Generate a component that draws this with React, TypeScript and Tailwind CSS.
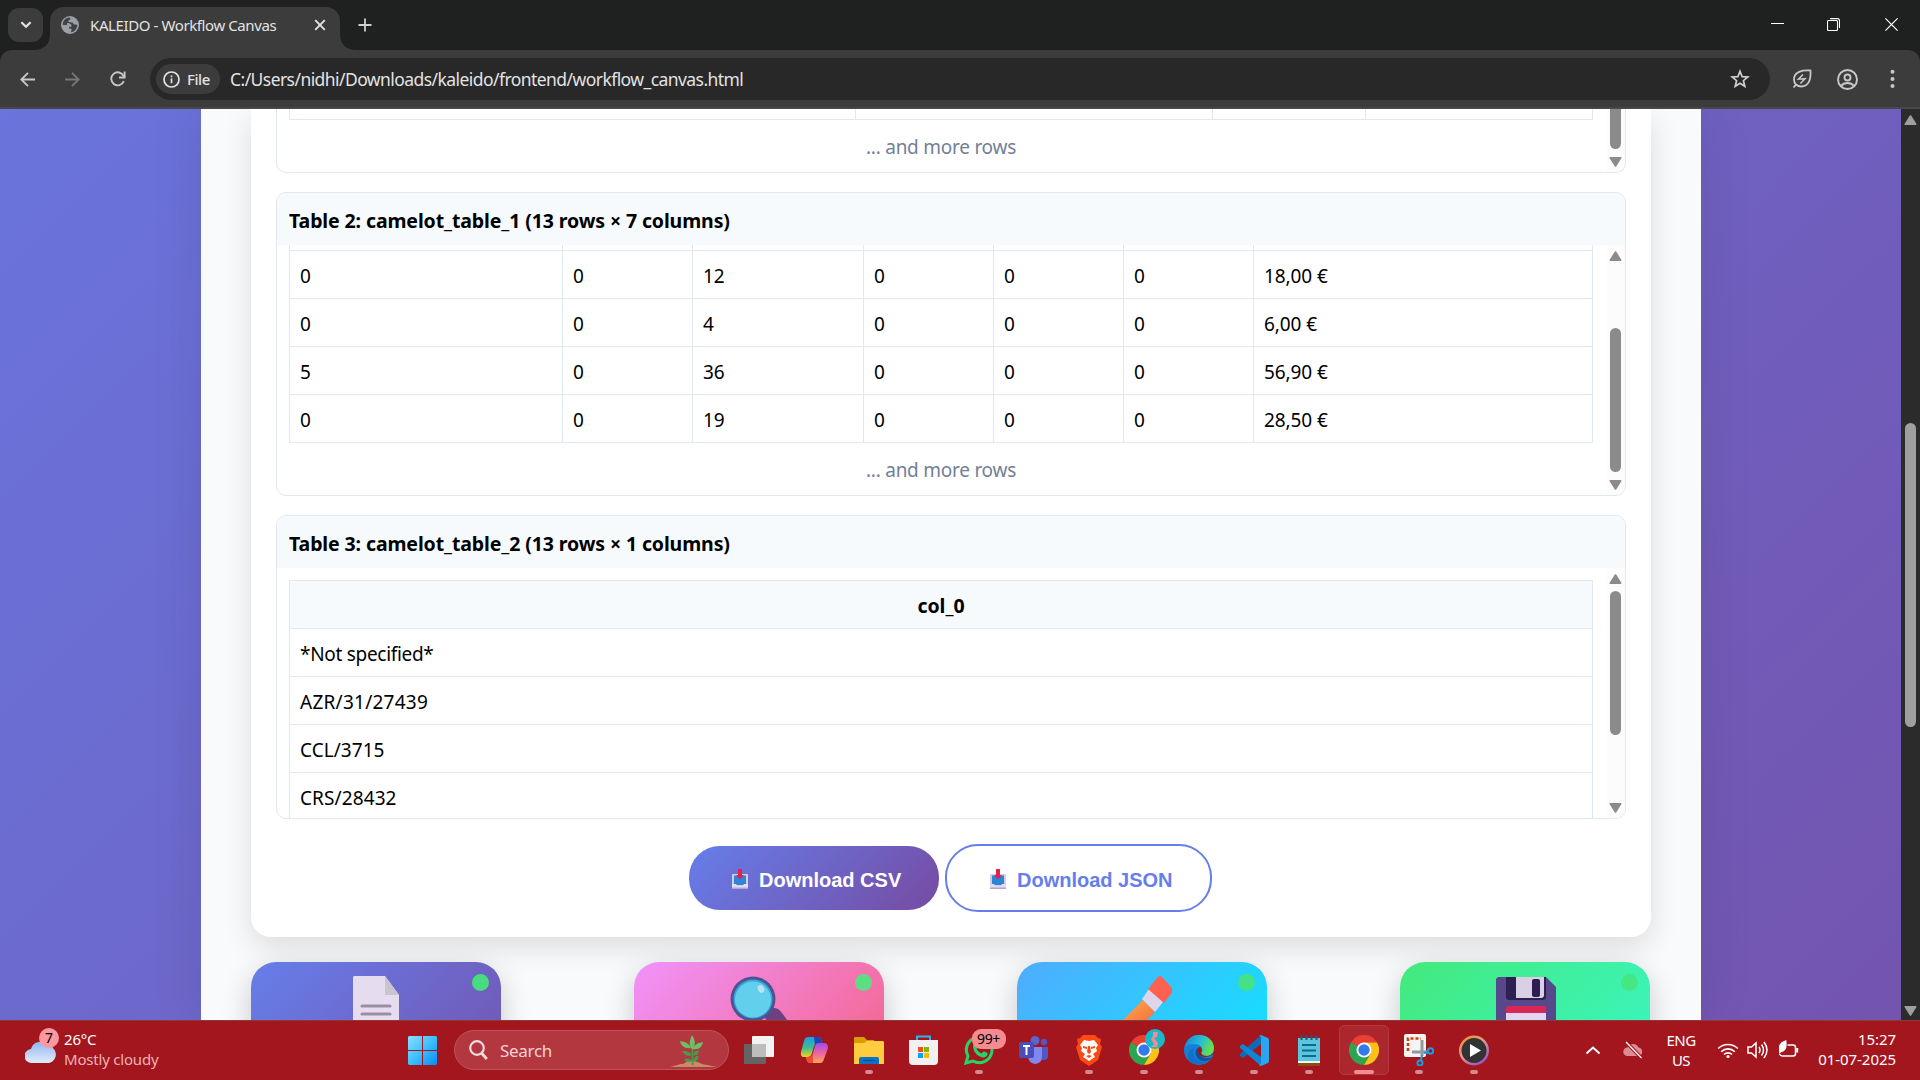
import React from "react";

const ui = "font-['Noto_Sans','Open_Sans',sans-serif]";

/* ---------- Browser chrome ---------- */

function TabStrip() {
  return (
    <div className="flex h-[50px] items-start bg-[#1f2120] text-[#e3e3e3]">
      <div className="ml-2 mt-2 flex h-[34px] w-[35px] items-center justify-center rounded-[11px] bg-[#3c3c3c]">
        <svg width="12" height="8" viewBox="0 0 12 8" fill="none" stroke="#e3e3e3" strokeWidth="2.2">
          <path d="M1.4 1.2 6 5.8l4.6-4.6" />
        </svg>
      </div>
      <svg className="-ml-[9px] mt-[34px]" width="16" height="16" viewBox="0 0 16 16">
        <path d="M16 0v16H0C10 16 16 10 16 0Z" fill="#3c3c3c" />
      </svg>
      <div className="mt-[7px] flex h-[43px] w-[290px] items-center rounded-t-[14px] bg-[#3c3c3c] pb-[7px] pl-[11px]">
        <svg width="18" height="18" viewBox="0 0 18 18">
          <circle cx="9" cy="9" r="9" fill="#9aa0a6" />
          <path d="M3 4.500C4.500 2.500 6.500 1.600 9 1.600c1 1.400-.2 2.800-1.900 3.200-.2 1.700 3 1.400 4.600 1.900 1 .6.500 1.700 1.500 1.900 1.200.2 2.300-.1 3.100.4-.1 3.700-2.600 6.700-6.300 7.300-.3-1 .6-1.700 1-2.500-.4-1-2.300-.7-2.900-1.700-.2-1.100.9-1.600.4-2.400C6.500 8.900 3.600 9.500 1.700 8.800 1.700 7.200 2.200 5.700 3 4.500Z" fill="#3f4246" />
          <path d="M6 7.300c1.600-.6 3.100.2 4.200 1.500.8 1 .4 1.900-.6 2.100-1.600-.5-4.500-1.500-3.600-3.600Z" fill="#9aa0a6" />
        </svg>
        <span className={`${ui} ml-[11px] w-[224px] text-[15px] leading-5 tracking-[-0.4px] whitespace-nowrap`}>KALEIDO - Workflow Canvas</span>
        <svg width="12" height="12" viewBox="0 0 12 12" stroke="#e3e3e3" strokeWidth="1.9">
          <path d="m1.200 1.200 9.600 9.600m0-9.600-9.600 9.600" />
        </svg>
      </div>
      <svg className="mt-[34px]" width="16" height="16" viewBox="0 0 16 16">
        <path d="M0 0c0 10 6 16 16 16H0Z" fill="#3c3c3c" />
      </svg>
      <svg className="ml-[2px] mt-[18px]" width="14" height="14" viewBox="0 0 14 14" stroke="#d0d0d0" strokeWidth="1.8">
        <path d="M7 .5v13M.5 7h13" />
      </svg>
      <div className="ml-auto mr-[22px] mt-[18px] flex items-start">
        <svg width="13" height="13" viewBox="0 0 13 13"><path d="M0 5.500h13" stroke="#fff" /></svg>
        <svg className="ml-[43px]" width="13" height="13" viewBox="0 0 13 13" fill="none" stroke="#fff" strokeWidth="1.100">
          <rect x=".500" y="2.500" width="10" height="10" rx="1" />
          <path d="M3 .600h7.500a2 2 0 0 1 2 2V10" />
        </svg>
        <svg className="ml-[45px]" width="13" height="13" viewBox="0 0 13 13" stroke="#fff" strokeWidth="1.200"><path d="m.400.400 12.200 12.200m0-12.200L.400 12.600" /></svg>
      </div>
    </div>
  );
}

function Toolbar() {
  return (
    <div className="bg-[#1f2120]">
      <div className="flex h-[59px] items-start rounded-t-[12px] border-b-2 border-[#484848] bg-[#3c3c3c] pt-2">
        <div className="flex h-[42px] w-[150px] items-center pl-[20px]">
          <svg width="15" height="15" viewBox="0 0 15 15" fill="none" stroke="#c7c7c7" strokeWidth="1.900"><path d="M15 7.500H1.500M8 .800 1.300 7.500 8 14.200" /></svg>
          <svg className="ml-[30px]" width="15" height="15" viewBox="0 0 15 15" fill="none" stroke="#767676" strokeWidth="1.900"><path d="M0 7.500h13.500M7 .800l6.700 6.700L7 14.200" /></svg>
          <svg className="ml-[30px]" width="16" height="16" viewBox="0 0 16 16" fill="none" stroke="#c7c7c7" strokeWidth="1.900">
            <path d="M13.800 10.200A6.500 6.500 0 1 1 13.600 5L15 6.200" /><path d="M14.600.5v6H9" />
          </svg>
        </div>
        <div className="flex h-[42px] w-[1620px] items-center rounded-full bg-[#282828] pl-[6px]">
          <div className="flex h-[30px] w-[64px] items-center rounded-full bg-[#3c3c3c] pl-[7px]">
            <svg width="17" height="17" viewBox="0 0 17 17" fill="none" stroke="#e3e3e3" strokeWidth="1.700">
              <circle cx="8.500" cy="8.500" r="7.500" /><path d="M8.500 7.600v4.600M8.500 4.500v1.700" />
            </svg>
            <span className={`${ui} ml-[7px] text-[15px] font-medium leading-5 tracking-[-0.45px] text-[#e3e3e3]`}>File</span>
          </div>
          <span className={`${ui} ml-[10px] text-[17.500px] leading-6 tracking-[-0.560px] text-[#e3e3e3]`}>C:/Users/nidhi/Downloads/kaleido/frontend/workflow_canvas.html</span>
          <svg className="ml-auto mr-[20px]" width="20" height="20" viewBox="0 0 20 20" fill="none" stroke="#d0d0d0" strokeWidth="1.700">
            <path d="m10 2.300 2.100 5.300 5.700.4-4.400 3.700 1.400 5.600L10 14.200l-4.800 3.100 1.400-5.600L2.200 8l5.700-.4Z" />
          </svg>
        </div>
        <div className="flex h-[42px] items-center pl-[22px]">
          <svg width="20" height="20" viewBox="0 0 20 20" fill="none" stroke="#c7c7c7" strokeWidth="1.800">
            <path d="M18.500 1.500C10 1 2 2.500 2 10.500c0 2.300.8 3.800 2 5 1.300 1.200 3 2 5.300 2 7.700 0 9.700-7.500 9.200-16ZM1.500 18.500 4 15.600" />
            <path d="m11 5.500-4.500 4.700 6.500-.4-4.600 4.700" strokeWidth="1.600" />
          </svg>
          <svg className="ml-[25px]" width="21" height="21" viewBox="0 0 21 21" fill="none" stroke="#c7c7c7" strokeWidth="1.900">
            <circle cx="10.500" cy="10.500" r="9.500" /><circle cx="10.500" cy="8.500" r="3" /><path d="M4 17c1.600-2.200 3.800-3 6.500-3s4.900.8 6.500 3" />
          </svg>
          <svg className="ml-[32px]" width="5" height="20" viewBox="0 0 5 20" fill="#c7c7c7">
            <circle cx="2.500" cy="2.800" r="2" /><circle cx="2.500" cy="10" r="2" /><circle cx="2.500" cy="17" r="2" />
          </svg>
        </div>
      </div>
    </div>
  );
}

/* ---------- Page content ---------- */

function Arrow({ down, className }: { down?: boolean; className: string }) {
  return (
    <svg width="13" height="10" viewBox="0 0 13 10" className={`shrink-0 ${className}`}>
      <path d={down ? "M1.300.8h10.400L6.500 9Z" : "M1.300 9.200h10.400L6.500 1Z"} fill="currentColor" stroke="currentColor" strokeLinejoin="round" strokeWidth="1.600" />
    </svg>
  );
}

function TableBox({ title, children, bar }: { title: string; children: React.ReactNode; bar: React.ReactNode }) {
  return (
    <section className="mb-[19px] h-[304px] overflow-hidden rounded-[10px] border border-[#e2e8f0]">
      <h3 className="h-[52px] bg-[#f7fafc] pl-[12px] pt-[15px] text-[19.500px] font-bold leading-[26px] tracking-[-0.110px]">{title}</h3>
      <div className="flex h-[250px] overflow-hidden">
        <div className="w-[1330px] pl-[12px] pr-[14px]">{children}</div>
        <div className="flex w-[18px] flex-col items-center bg-[#fcfcfc] pr-px text-[#8b8b8b]">{bar}</div>
      </div>
    </section>
  );
}

const cols = "grid grid-cols-[273px_130px_171px_130px_130px_130px_1fr]";
const rows = [
  ["0", "0", "12", "0", "0", "0", "18,00 €"],
  ["0", "0", "4", "0", "0", "0", "6,00 €"],
  ["5", "0", "36", "0", "0", "0", "56,90 €"],
  ["0", "0", "19", "0", "0", "0", "28,50 €"],
];
const codes = [
  { text: "*Not specified*", spacing: "tracking-[-0.300px]" },
  { text: "AZR/31/27439", spacing: "tracking-[0.250px]" },
  { text: "CCL/3715", spacing: "tracking-[0.050px]" },
  { text: "CRS/28432", spacing: "tracking-[0.100px]" },
];

function MoreRows() {
  return <p className="text-center text-[19px] leading-7 tracking-[-0.250px] text-[#718096]">... and more rows</p>;
}

function Results() {
  return (
    <div className="mx-[50px] h-[828px] rounded-b-[20px] bg-white px-[25px] shadow-[0_10px_30px_rgba(0,0,0,0.120)]">
      <section className="mb-[19px] flex h-[64px] overflow-hidden rounded-b-[10px] border border-t-0 border-[#e2e8f0]">
        <div className="w-[1330px] pl-[12px] pr-[14px]">
          <div className="mb-[13px] grid h-[11px] grid-cols-[566px_357px_153px_1fr] border-b border-r border-[#e2e8f0]">
            {[0, 1, 2, 3].map((i) => <div key={i} className="border-l border-[#e2e8f0]" />)}
          </div>
          <MoreRows />
        </div>
        <div className="flex w-[18px] flex-col items-center bg-[#fcfcfc] pr-px text-[#8b8b8b]">
          <div className="h-[40px] w-[11px] rounded-b-full bg-[#8b8b8b]" />
          <Arrow down className="mt-2" />
        </div>
      </section>

      <TableBox
        title="Table 2: camelot_table_1 (13 rows × 7 columns)"
        bar={<><Arrow className="mt-[6px]" /><div className="mt-[67px] h-[144px] w-[11px] shrink-0 rounded-full bg-[#8b8b8b]" /><Arrow down className="mt-2" /></>}
      >
        <div className="mb-[13px] border-b border-r border-[#e2e8f0]">
          <div className={`${cols} h-[5px]`}>
            {rows[0].map((_, i) => <div key={i} className="border-l border-[#e2e8f0]" />)}
          </div>
          {rows.map((r, y) => (
            <div key={y} className={cols}>
              {r.map((c, x) => (
                <div key={x} className="h-[48px] border-l border-t border-[#e2e8f0] pl-[10px] pt-[12px] text-[19px] leading-[26px] tracking-[-0.100px]">{c}</div>
              ))}
            </div>
          ))}
        </div>
        <MoreRows />
      </TableBox>

      <TableBox
        title="Table 3: camelot_table_2 (13 rows × 1 columns)"
        bar={<><Arrow className="mt-[6px]" /><div className="mt-[7px] h-[144px] w-[11px] shrink-0 rounded-full bg-[#8b8b8b]" /><Arrow down className="mt-[68px]" /></>}
      >
        <div className="mt-[12px] border-r border-[#e2e8f0]">
          <div className="h-[48px] border-l border-t border-[#e2e8f0] bg-[#f7fafc] pt-[12px] text-center text-[19.500px] font-bold leading-[26px] tracking-[0px]">col_0</div>
          {codes.map((c) => (
            <div key={c.text} className={`h-[48px] border-l border-t border-[#e2e8f0] pl-[10px] pt-[12px] text-[19px] leading-[26px] ${c.spacing}`}>{c.text}</div>
          ))}
        </div>
      </TableBox>

      <div className="mt-[25px] flex items-center pl-[413px] font-['Liberation_Sans',Arial,sans-serif] text-[20px] font-bold">
        <button className="flex h-[64px] w-[250px] items-center rounded-[31px] bg-[linear-gradient(135deg,#667eea,#764ba2)] pl-[43px] text-white">
          <Inbox /><span className="ml-[11px] mt-[4px]">Download CSV</span>
        </button>
        <button className="ml-[6px] flex h-[68px] w-[267px] items-center rounded-[33px] border-2 border-[#667eea] bg-white pl-[43px] text-[#667eea]">
          <Inbox /><span className="ml-[11px] mt-[4px]">Download JSON</span>
        </button>
      </div>
    </div>
  );
}

function Inbox() {
  return (
    <svg className="mt-[2px] shrink-0" width="16" height="20" viewBox="0 0 16 20">
      <path d="M1 5h14q1 0 1 1v14H0V6q0-1 1-1Z" fill="#d5cde0" />
      <path d="M2 6.500h12V16H2Z" fill="#2b86d8" />
      <path d="M0 15h4l1.500 2h5l1.500-2h4v5H0Z" fill="#e4dced" /><path d="M0 18.500h16V20H0Z" fill="#b9a5cc" />
      <path d="M6 0h4v6h2L8 10.500 4 6h2Z" fill="#e0244f" />
    </svg>
  );
}

function StepCard({ bg, dot, children, gap }: { bg: string; dot: string; children: React.ReactNode; gap?: string }) {
  return (
    <div className={`relative flex h-[200px] w-[250px] shrink-0 justify-center rounded-[25px] shadow-[0_10px_30px_rgba(0,0,0,0.200)] ${bg} ${gap ?? ""}`}>
      {children}
      <span className={`absolute right-[12px] top-[12px] size-[17px] rounded-full ${dot}`} />
    </div>
  );
}

function Steps() {
  return (
    <div className="ml-[50px] mt-[25px] flex">
      <StepCard bg="bg-[linear-gradient(135deg,#667eea,#764ba2)]" dot="bg-[#48db80]">
        <svg className="mt-[14px]" width="48" height="60" viewBox="0 0 48 60">
          <path d="M2 0h31l14 19v41H1V1Z" fill="#e6dcef" />
          <path d="m33 0 14 19H33Z" fill="#cbc3d0" />
          <path d="M10 30h28M10 38h28M10 46.500h28M10 55h18" stroke="#9990a2" strokeWidth="3" strokeLinecap="round" />
        </svg>
      </StepCard>
      <StepCard gap="ml-[133px]" bg="bg-[linear-gradient(135deg,#f093fb,#f5576c)]" dot="bg-[#5fdd82]">
        <svg className="mt-[14px]" width="60" height="60" viewBox="0 0 60 60">
          <path d="m38 36 6-4c6-1 10 6 14 12l-10 14-12-16Z" fill="#6d4080" />
          <circle cx="24" cy="23" r="22.500" fill="#4f5290" />
          <circle cx="24" cy="23" r="19.500" fill="#36a6dd" /><circle cx="24" cy="23.500" r="18" fill="#62d0ec" />
          <ellipse cx="32" cy="13" rx="3" ry="4" fill="#bfe0f5" transform="rotate(-30 32 13)" />
        </svg>
      </StepCard>
      <StepCard gap="ml-[133px]" bg="bg-[linear-gradient(135deg,#4facfe,#00f2fe)]" dot="bg-[#43e287]">
        <svg className="mt-[14px]" width="60" height="60" viewBox="0 0 60 60">
          <defs><linearGradient id="pc" x1="0" y1="0" x2="1" y2="1"><stop offset=".35" stopColor="#ff9a45" /><stop offset="1" stopColor="#e65c40" /></linearGradient></defs>
          <path d="M31 24 43 36 19 60H-5Z" fill="url(#pc)" />
          <path d="m37 13 14 13-8 10-13-13Z" fill="#ded4ec" />
          <path d="M45 2q3-4 6 0l8 9q3 4 0 7l-7 9L36 13Z" fill="#ff6150" />
        </svg>
      </StepCard>
      <StepCard gap="ml-[133px]" bg="bg-[linear-gradient(135deg,#43e97b,#38f9d7)]" dot="bg-[#45e783]">
        <svg className="ml-[2px] mt-[15px]" width="60" height="60" viewBox="0 0 60 60">
          <path d="M2 0h48l10 10v50H0V2Z" fill="#57488c" />
          <path d="M10 0h40v20q0 3-3 3H13q-3 0-3-3Z" fill="#2f2052" />
          <path d="M20 0h28v18q0 3-3 3H20Z" fill="#d9d0e6" />
          <rect x="36" y="2" width="8" height="18" rx="2" fill="#2f1c50" />
          <path d="M12 29h36q2 0 2 3v7H10v-7q0-3 2-3Z" fill="#d92657" /><path d="M10 36h40v24H10Z" fill="#e0d4ee" />
        </svg>
      </StepCard>
    </div>
  );
}

/* ---------- Taskbar ---------- */

function ChromeIcon() {
  return (
    <svg width="30" height="30" viewBox="0 0 30 30">
      <path d="M15 15 2 7.500A15 15 0 0 1 28 7.500H15Z" fill="#ea3f33" />
      <path d="M15 15 2 7.500A15 15 0 0 0 15 30l6.500-11.200Z" fill="#2da44f" />
      <path d="M15 7.500h13A15 15 0 0 1 15 30l6.500-11.200Z" fill="#fbc116" />
      <circle cx="15" cy="15" r="7.500" fill="#fff" /><circle cx="15" cy="15" r="5.700" fill="#3579ea" />
    </svg>
  );
}

function Item({ children, dot, active }: { children: React.ReactNode; dot?: boolean; active?: boolean }) {
  return (
    <div className="flex h-[60px] w-[55px] shrink-0 justify-center pt-[4px]">
      <div className={`relative flex h-[50px] w-[50px] items-center justify-center rounded-[5px] ${active ? "border border-[#b23a41] bg-[#ac262e]" : ""}`}>
        {children}
        {dot && <span className={`absolute h-[4px] rounded-full ${active ? "bottom-0 w-[20px] bg-[#f58a91]" : "bottom-[1px] w-[8px] bg-[#d28a8f]"}`} />}
      </div>
    </div>
  );
}

function Taskbar() {
  return (
    <div className={`${ui} flex h-[60px] border-t border-[#8c3b36] bg-[#a4161e] text-white`}>
      <div className="flex w-[395px] pl-[25px] text-[15px] leading-5">
        <div className="relative w-[39px] pt-[12px]">
          <svg width="31" height="32" viewBox="0 0 31 32">
            <circle cx="21" cy="15" r="7" fill="#f28a1c" />
            <defs><linearGradient id="cl" x2="0" y2="1"><stop stopColor="#8fb5ee" /><stop offset="1" stopColor="#e3edfb" /></linearGradient></defs>
            <path d="M7 30a7 7 0 0 1-1-14 9.500 9.500 0 0 1 17-3 8.600 8.600 0 0 1 1 17Z" fill="url(#cl)" />
          </svg>
          <span className="absolute left-[14px] top-[7px] size-[20px] rounded-full bg-[#ff97a0] text-center text-[14px] leading-5 text-black">7</span>
        </div>
        <div className="pt-[8px] tracking-[-0.200px]">
          <div>26°C</div>
          <div className="text-[#e9b3b7]">Mostly cloudy</div>
        </div>
      </div>
      <div className="flex">
        <Item>
          <svg width="29" height="29" viewBox="0 0 29 29">
            <defs><linearGradient id="wn" x2="1" y2="1"><stop stopColor="#8be0ff" /><stop offset=".5" stopColor="#3cc0fc" /><stop offset="1" stopColor="#0a8af5" /></linearGradient></defs>
            <path d="M1 0h13v14H0V1Zm14 0h13l1 1v13H15ZM0 15h14v14H1l-1-1Zm15 0h14v13l-1 1H15Z" fill="url(#wn)" />
          </svg>
        </Item>
        <div className="ml-[4px] mr-[2px] mt-[9px] flex h-[40px] w-[275px] items-center rounded-full border border-[#bd535a] bg-[#b2373e] pl-[14px]">
          <svg width="19" height="20" viewBox="0 0 19 20" fill="none" stroke="#f1dcdd" strokeWidth="2.200"><circle cx="8" cy="8" r="6.800" /><path d="m12.500 13 5.300 6" strokeWidth="2.800" /></svg>
          <span className="ml-[12px] mt-[2px] text-[17px] tracking-[-0.300px] text-[#f0d3d5]">Search</span>
          <svg className="ml-auto mr-[11px] mt-[2px]" width="47" height="33" viewBox="0 0 47 33">
            <path d="M0 32c6-1 8-3 13-3 4-3 7-4 11-3 5 1 9 4 13 4l10 2Z" fill="#c98a68" />
            <path d="M22.500 30V11" stroke="#4c9a3f" strokeWidth="1.800" />
            <g fill="#6fbf6a"><path d="M22 14c-4-5-2-9 0-14 3 5 4 9 1 14Z" /><path d="M21 13c-2-5-6-6-11-7 1 5 5 8 11 7ZM23 14c2-5 5-6 10-7-1 5-4 8-10 7Z" /></g>
            <g fill="#429d50"><path d="M22 20c-3-4-6-4-10-4 2 4 6 6 10 4ZM22 26c-3-3-5-3-8-2 2 3 5 4 8 2ZM23 20c1-4 4-5 6-4 0 3-3 5-6 4ZM23 27c1-4 3-7 5-6 1 3-1 5-5 6Z" /></g>
          </svg>
        </div>
        <Item>
          <svg width="30" height="28" viewBox="0 0 30 28"><rect y="8" width="22" height="20" rx="1" fill="#646464" /><rect x="8" width="22" height="21" rx="1" fill="#f3f3f3" /><path d="M8 8h14v13H8Z" fill="#bdbdbd" /></svg>
        </Item>
        <Item>
          <svg width="28" height="26" viewBox="0 0 28 26">
            <defs>
              <linearGradient id="ca" x2="0" y2="1"><stop stopColor="#1f9bee" /><stop offset=".55" stopColor="#3ec08a" /><stop offset="1" stopColor="#f5d31c" /></linearGradient>
              <linearGradient id="cb" x2="0" y2="1"><stop stopColor="#a04bf0" /><stop offset=".55" stopColor="#f0679a" /><stop offset="1" stopColor="#ffa65a" /></linearGradient>
            </defs>
            <path d="M8 0h10q3 0 4 6h-4q-3 0-4 3l-2 7q-1 4-5 4H4q-4 0-3-5L4 4Q5 0 8 0Z" fill="url(#ca)" />
            <path d="M14 0h4q3 0 4 6h-4q-2 0-3 2Z" fill="#1246c4" />
            <path d="M20 26H10q-3 0-4-6h3q3 0 4-4l2-7q1-3 4-3h5q4 0 4 5l-4 11q-1 4-4 4Z" fill="url(#cb)" />
            <path d="M13 26h-3q-3 0-4-6h3q3 0 4-4Z" fill="#ee4b35" />
          </svg>
        </Item>
        <Item dot>
          <svg width="30" height="29" viewBox="0 0 30 29"><path d="M0 2q0-1 1-1h9l3 3h7v8H0Z" fill="#dc9a04" /><path d="M0 7h10l3-2h16l1 1v22H0Z" fill="#ffcb3f" /><path d="M5 28v-5q0-2 2-2h16q2 0 2 2v5Z" fill="#0e72c4" /><path d="M9 24.500h12" stroke="#0a4a8c" /></svg>
        </Item>
        <Item>
          <svg width="29" height="30" viewBox="0 0 29 30"><path d="M8 7V1.500h13V7" fill="none" stroke="#27b4f2" strokeWidth="2" /><path d="M0 5h29v21q0 4-4 4H4q-4 0-4-4Z" fill="#f1f1f1" /><path d="M9 12h5v5H9Z" fill="#f05022" /><path d="M15 12h5v5h-5Z" fill="#7fba00" /><path d="M9 18h5v5H9Z" fill="#00a4ef" /><path d="M15 18h5v5h-5Z" fill="#ffb900" /></svg>
        </Item>
        <Item dot>
          <svg width="30" height="30" viewBox="0 0 30 30"><path d="m2 28 2-7a12.800 12.800 0 1 1 5 5Z" fill="none" stroke="#27d366" strokeWidth="3" /><path d="M10 8c2-1 3 0 4 4l-1.500 2q2 3.500 5 4.500l2-2q5 1 4 3-1.500 3.500-5 3Q10 20 9 12q0-3 1-4Z" fill="#27d366" /></svg>
          <span className="absolute left-[18px] top-[4px] h-[20px] w-[34px] rounded-[9px] bg-[#f58a91] text-center text-[14px] leading-5 tracking-[-0.300px] text-black">99+</span>
        </Item>
        <Item>
          <svg width="29" height="28" viewBox="0 0 29 28"><circle cx="16" cy="4.500" r="4.500" fill="#5b64cf" /><circle cx="25" cy="6" r="3.200" fill="#4f58c4" /><path d="M20 11h9v9q0 4-4 4h-5Z" fill="#4f58c4" /><path d="M10 11h13v10q0 6-7 7-6-1-7-7Z" fill="#7f88ee" /><rect y="6" width="15" height="16" rx="2" fill="#4650b8" /><path d="M4 10h7M7.500 10v9" stroke="#fff" strokeWidth="2" /></svg>
        </Item>
        <Item dot>
          <svg width="26" height="31" viewBox="0 0 26 31"><path d="m7 0h12l3 3 3 1-1 5 2 3-4 13-9 6-9-6L0 12l2-3-1-5 3-1Z" fill="#fb4a13" /><path d="m8 5 5 1 5-1 4 5-2 3 1 3-4 3 2 3-6 4-6-4 2-3-4-3 1-3-2-3Z" fill="#fff" /><path d="m7 11 4 1v2l-4-1Zm12 0-4 1v2l4-1ZM12 11h2l1 6-2 2-2-2Zm-2 10 3-1 3 1-3 2Z" fill="#fb4a13" /></svg>
        </Item>
        <Item dot>
          <ChromeIcon />
          <span className="absolute left-[26px] top-[4px] flex size-[20px] items-center justify-center rounded-full bg-[#1bb7cb]">
            <svg width="9" height="15" viewBox="0 0 9 15"><path d="M3 0h5L7 5 4 6l4 5-1 4H1l3-3-3-5 2-3Z" fill="#f08d91" /></svg>
          </span>
        </Item>
        <Item dot>
          <svg width="30" height="30" viewBox="0 0 30 30">
            <defs><linearGradient id="ea" x2="1" y2=".3"><stop stopColor="#1485d8" /><stop offset=".6" stopColor="#28bfd3" /><stop offset="1" stopColor="#64e04c" /></linearGradient></defs>
            <circle cx="15" cy="15" r="15" fill="#1481d6" />
            <path d="M1 12C3 3 9 0 15 0c9 0 15 6 15 13 0 5-4 8-8 8-3 0-5-1-5-3 2-2 2-6-2-8-5-2-11-1-14 2Z" fill="url(#ea)" />
            <path d="M10 13c-3 8 3 14 12 14-9 6-20 1-18-8 1-4 4-5 6-6Z" fill="#1270c8" />
            <path d="M15 12c-6 2-4 13 4 14 4 1 7-1 9-4-5 3-14 0-12-5Z" fill="#10519c" />
            <path d="M17 18c2-2 1-5-1-6-3 1-3 6 1 9 4 2 8 1 13-2l-1 3 2-2v-4c-2 3-5 5-8 5-3 0-5-1-6-3Z" fill="#a4161e" />
          </svg>
        </Item>
        <Item dot>
          <svg width="30" height="31" viewBox="0 0 30 31"><path d="M22 0v9L4 23l-3-2v-2Z" fill="#0a6cb8" /><path d="m1 11 3-2 18 13v9L1 13Z" fill="#0c86d6" /><path d="m22 0 7 3q1 1 1 2v21q0 1-1 2l-7 3-2-1 2-2V2l-2-1Z" fill="#2aa6f0" /></svg>
        </Item>
        <Item dot>
          <svg width="22" height="31" viewBox="0 0 22 31"><path d="M0 3h22v24H0Z" fill="#5cc4dd" /><path d="M0 26h22v2H0Z" fill="#f0f4f5" /><path d="M0 28h22v3H0Z" fill="#8a4a10" /><path d="M3.500 0v5M8.500 0v5M13.500 0v5M18.500 0v5" stroke="#1b5f7c" strokeWidth="2" /><path d="M4 10h14M4 15.500h14M4 21h14" stroke="#0c6a8c" strokeWidth="2" /></svg>
        </Item>
        <Item dot active><ChromeIcon /></Item>
        <Item dot>
          <svg width="30" height="32" viewBox="0 0 30 32"><rect width="22" height="23" rx="2" fill="#f4f4f4" /><path d="M4 17V4.500h13" fill="none" stroke="#d83b0a" strokeWidth="2.600" strokeDasharray="3 2" /><path d="M8 18h16M18 6v16" stroke="#9299a0" strokeWidth="3" /><circle cx="26.500" cy="17" r="2.700" fill="none" stroke="#1e9be0" strokeWidth="2" /><circle cx="16" cy="29" r="2.500" fill="none" stroke="#1e9be0" strokeWidth="2" /><path d="m20 19 4-1M17 26l1-5" stroke="#1e9be0" strokeWidth="2" /></svg>
        </Item>
        <Item dot>
          <svg width="30" height="31" viewBox="0 0 30 31"><defs><linearGradient id="mp" x2=".7" y2="1"><stop stopColor="#ff8a1f" /><stop offset=".5" stopColor="#e49a8c" /><stop offset="1" stopColor="#9a50c8" /></linearGradient></defs><circle cx="15" cy="15.500" r="15" fill="url(#mp)" /><circle cx="15" cy="15.500" r="12.500" fill="#333" /><path d="M11 9v13l11-6.500Z" fill="#fff" /></svg>
        </Item>
      </div>
      <div className="ml-auto flex pr-[24px] text-[15px] leading-5">
        <svg className="mt-[24px]" width="16" height="10" viewBox="0 0 16 10" fill="none" stroke="#fff" strokeWidth="2"><path d="m1.500 8.500 6.500-6 6.500 6" /></svg>
        <svg className="ml-[22px] mt-[20px]" width="21" height="18" viewBox="0 0 21 18"><path d="M4.500 15a4 4 0 0 1 0-8.500 6 6 0 0 1 11 0 4.300 4.300 0 0 1 0 8.500Z" fill="#d98c91" /><path d="m3 1 15.500 16" stroke="#a4161e" strokeWidth="3.500" /><path d="m3 1 15.500 16" stroke="#fff" strokeWidth="1.300" /></svg>
        <div className="ml-[19px] w-[36px] pt-[9px] text-center tracking-[-0.500px]">ENG<br />US</div>
        <svg className="ml-[18px] mt-[21px]" width="22" height="17" viewBox="0 0 22 17" fill="none" stroke="#fff" strokeWidth="1.600"><path d="M1.200 6.500a14 14 0 0 1 19.600 0M4.200 9.700a9.700 9.700 0 0 1 13.600 0M7 12.500a5.700 5.700 0 0 1 8 0" /><circle cx="11" cy="14.500" r="1.600" fill="#fff" stroke="none" /></svg>
        <svg className="ml-[8px] mt-[20px]" width="22" height="18" viewBox="0 0 22 18" fill="none" stroke="#fff" strokeWidth="1.500"><path d="M1 6h3.500L9 2v14l-4.500-4H1ZM12 6q2 3 0 6M14.500 3.500q4 5.500 0 11M17 1q6 8 0 16" /></svg>
        <svg className="ml-[9px] mt-[19px]" width="21" height="18" viewBox="0 0 21 18" fill="none" stroke="#fff" strokeWidth="1.500"><path d="M9.500 5H15q2.500 0 2.500 2.500v6Q17.500 16 15 16H4.500Q2.500 16 1.500 14" /><path d="M19.200 8v4.500" strokeWidth="2" /><path d="M8.300 0C9 6 9 11 3.500 12L1 14V6q1-4 7.300-6Z" fill="#fff" stroke="none" /></svg>
        <div className="ml-[16px] w-[81px] whitespace-nowrap pt-[8px] text-right tracking-[-0.050px]">15:27<br />01-07-2025</div>
      </div>
    </div>
  );
}

export default function App() {
  return (
    <div className={`${ui} h-[1080px] w-[1920px] overflow-hidden bg-[#1f2120] text-black`}>
      <TabStrip />
      <Toolbar />
      <main className="flex h-[911px] overflow-hidden">
        <div className="h-full w-[1901px] overflow-hidden bg-[linear-gradient(135deg,#667eea,#764ba2)] bg-[length:1901px_2625px] bg-[position:0_-887px] pl-[201px]">
          <div className="h-full w-[1500px] overflow-hidden bg-[#f8fafc] shadow-[0_0_50px_rgba(0,0,0,0.100)]">
            <Results />
            <Steps />
          </div>
        </div>
        <div className="flex w-[19px] flex-col items-center bg-[#2b2b2b] text-[#9f9f9f]">
          <Arrow className="mt-[6px]" />
          <div className="mt-[298px] h-[304px] w-[11px] rounded-full bg-[#9f9f9f]" />
          <Arrow down className="mt-[279px]" />
        </div>
      </main>
      <Taskbar />
    </div>
  );
}
